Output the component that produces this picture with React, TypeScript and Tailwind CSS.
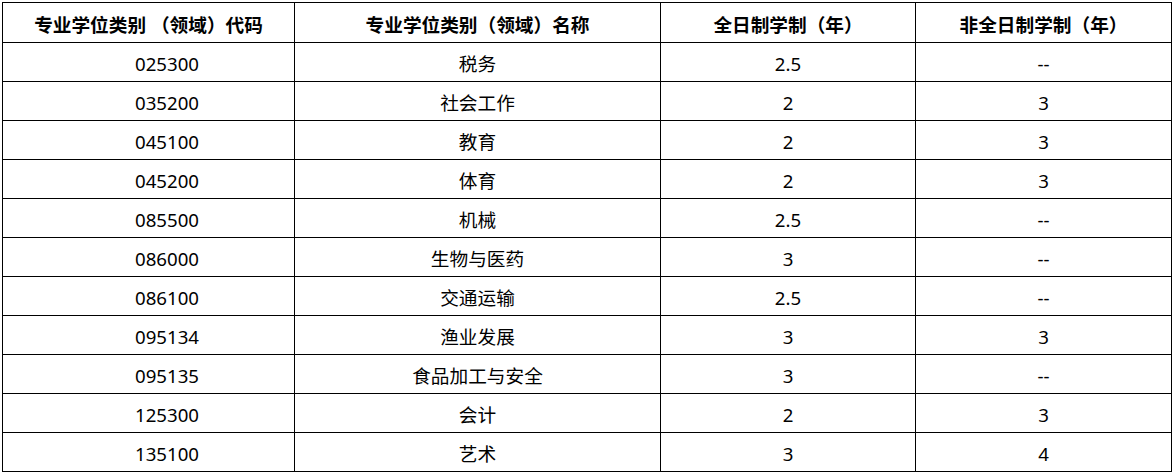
const rows = [
  { code: '025300', name: '税务', full: '2.5', part: '--' },
  { code: '035200', name: '社会工作', full: '2', part: '3' },
  { code: '045100', name: '教育', full: '2', part: '3' },
  { code: '045200', name: '体育', full: '2', part: '3' },
  { code: '085500', name: '机械', full: '2.5', part: '--' },
  { code: '086000', name: '生物与医药', full: '3', part: '--' },
  { code: '086100', name: '交通运输', full: '2.5', part: '--' },
  { code: '095134', name: '渔业发展', full: '3', part: '3' },
  { code: '095135', name: '食品加工与安全', full: '3', part: '--' },
  { code: '125300', name: '会计', full: '2', part: '3' },
  { code: '135100', name: '艺术', full: '3', part: '4' },
]

const App = () => {
  return (
    <div className="w-[1172px] h-[474px] bg-white pt-[2px] pl-[2px] font-['Noto_Sans','Noto_Sans_CJK_SC',sans-serif] text-black text-[18.67px]">
      <table className="border-collapse table-fixed w-[1169px]">
        <colgroup>
          <col className="w-[292px]" />
          <col className="w-[366px]" />
          <col className="w-[255px]" />
          <col className="w-[256px]" />
        </colgroup>
        <thead>
          <tr className="h-[40px]">
            <th className="border border-black font-bold text-center p-0 pt-[5px] leading-none">专业学位类别 （领域）代码</th>
            <th className="border border-black font-bold text-center p-0 pt-[5px] leading-none">专业学位类别（领域）名称</th>
            <th className="border border-black font-bold text-center p-0 pt-[5px] leading-none">全日制学制（年）</th>
            <th className="border border-black font-bold text-center p-0 pt-[5px] leading-none">非全日制学制（年）</th>
          </tr>
        </thead>
        <tbody>
          {rows.map((r) => (
            <tr key={r.code} className="h-[39px]">
              <td className="border border-black text-center p-0 pt-[5px] pl-[37px] leading-none">{r.code}</td>
              <td className="border border-black text-center p-0 pt-[5px] leading-none">{r.name}</td>
              <td className="border border-black text-center p-0 pt-[5px] leading-none">{r.full}</td>
              <td className="border border-black text-center p-0 pt-[5px] leading-none">{r.part}</td>
            </tr>
          ))}
        </tbody>
      </table>
    </div>
  )
}

export default App
